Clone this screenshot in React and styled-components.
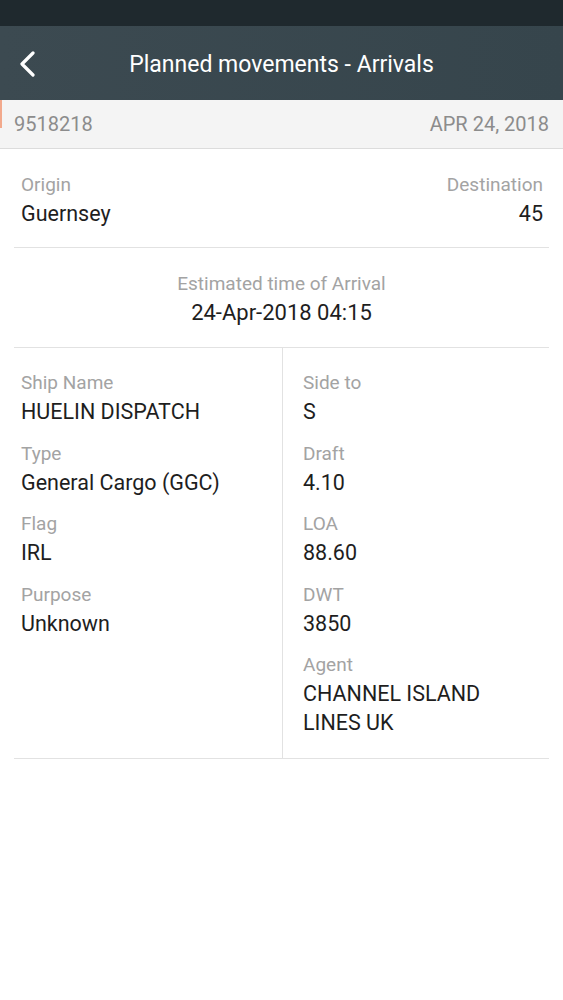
import styled, { createGlobalStyle } from "styled-components";

const GlobalStyle = createGlobalStyle`
body {
  margin: 0;
  background: #ffffff;
  font-family: Roboto, "Noto Sans", sans-serif;
}
`

const leftFields = [
  { label: "Ship Name", value: "HUELIN DISPATCH" },
  { label: "Type", value: "General Cargo (GGC)" },
  { label: "Flag", value: "IRL" },
  { label: "Purpose", value: "Unknown" },
]

const rightFields = [
  { label: "Side to", value: "S" },
  { label: "Draft", value: "4.10" },
  { label: "LOA", value: "88.60" },
  { label: "DWT", value: "3850" },
  { label: "Agent", value: ["CHANNEL ISLAND", "LINES UK"] },
]

export default function App() {
  return (
    <Screen>
      <GlobalStyle />
      <StatusBar />
      <Header>
        <BackButton>
          <svg width="16" height="26" viewBox="0 0 16 26">
            <polyline points="14,2 3,13 14,24" fill="none" stroke="#ffffff" strokeWidth="3.2" strokeLinecap="round" strokeLinejoin="round" />
          </svg>
        </BackButton>
        <Title>Planned movements - Arrivals</Title>
      </Header>

      <SubHeader>
        <span>9518218</span>
        <span>APR 24, 2018</span>
      </SubHeader>

      <Content>
        <RouteRow>
          <Field>
            <Label>Origin</Label>
            <Value>Guernsey</Value>
          </Field>
          <Field align="right">
            <Label>Destination</Label>
            <Value>45</Value>
          </Field>
        </RouteRow>

        <EtaRow>
          <Label>Estimated time of Arrival</Label>
          <EtaValue>24-Apr-2018 04:15</EtaValue>
        </EtaRow>

        <DetailGrid>
          <Column>
            {leftFields.map(f => (
              <Item key={f.label}>
                <Label>{f.label}</Label>
                <Value>{f.value}</Value>
              </Item>
            ))}
          </Column>
          <Column right>
            {rightFields.map(f => (
              <Item key={f.label}>
                <Label>{f.label}</Label>
                {Array.isArray(f.value)
                  ? f.value.map(line => <Value key={line}>{line}</Value>)
                  : <Value>{f.value}</Value>}
              </Item>
            ))}
          </Column>
        </DetailGrid>
      </Content>
    </Screen>
  )
}

const Screen = styled.div`
width: 563px;
min-height: 1000px;
background: #ffffff;
`
const StatusBar = styled.div`
height: 26px;
background-color: #1f292e;
`
const Header = styled.div`
position: relative;
height: 74px;
background: linear-gradient(90deg, #3c4a51 0%, #36454c 100%);
display: flex;
align-items: center;
justify-content: center;
`
const BackButton = styled.div`
position: absolute;
left: 19px;
top: 25px;
width: 16px;
height: 26px;
display: flex;
`
const Title = styled.div`
color: #ffffff;
font-size: 23px;
font-weight: 400;
padding-top: 3px;
`
const SubHeader = styled.div`
position: relative;
height: 48px;
background-color: #f4f4f4;
border-bottom: 1px solid #dcdcdc;
padding: 0 14px;
display: flex;
align-items: center;
justify-content: space-between;
font-size: 20px;
color: #8c8c8c;

&::before {
  content: "";
  position: absolute;
  left: 0;
  top: 0;
  width: 2px;
  height: 28px;
  background: #f2a98c;
}
`
const Content = styled.div`
padding: 0 14px;
`
const RouteRow = styled.div`
display: flex;
justify-content: space-between;
padding: 22px 6px 19px 7px;
border-bottom: 1px solid #e2e2e2;
`
const Field = styled.div`
display: flex;
flex-direction: column;
align-items: ${p => (p.align === "right" ? "flex-end" : "flex-start")};
`
const Label = styled.div`
font-size: 19px;
line-height: 28px;
color: #a3a3a3;
`
const Value = styled.div`
font-size: 21.5px;
line-height: 29px;
color: #1e1e1e;
`
const EtaRow = styled.div`
display: flex;
flex-direction: column;
align-items: center;
padding: 22px 0 20px;
border-bottom: 1px solid #e2e2e2;
`
const EtaValue = styled.div`
font-size: 22px;
line-height: 29px;
color: #1e1e1e;
`
const DetailGrid = styled.div`
display: grid;
grid-template-columns: 268px 1fr;
border-bottom: 1px solid #e2e2e2;
`
const Column = styled.div`
padding: 21px 0 7px ${p => (p.right ? "20px" : "7px")};
border-left: ${p => (p.right ? "1px solid #e2e2e2" : "none")};
display: flex;
flex-direction: column;
`
const Item = styled.div`
margin-bottom: 13.5px;
`
